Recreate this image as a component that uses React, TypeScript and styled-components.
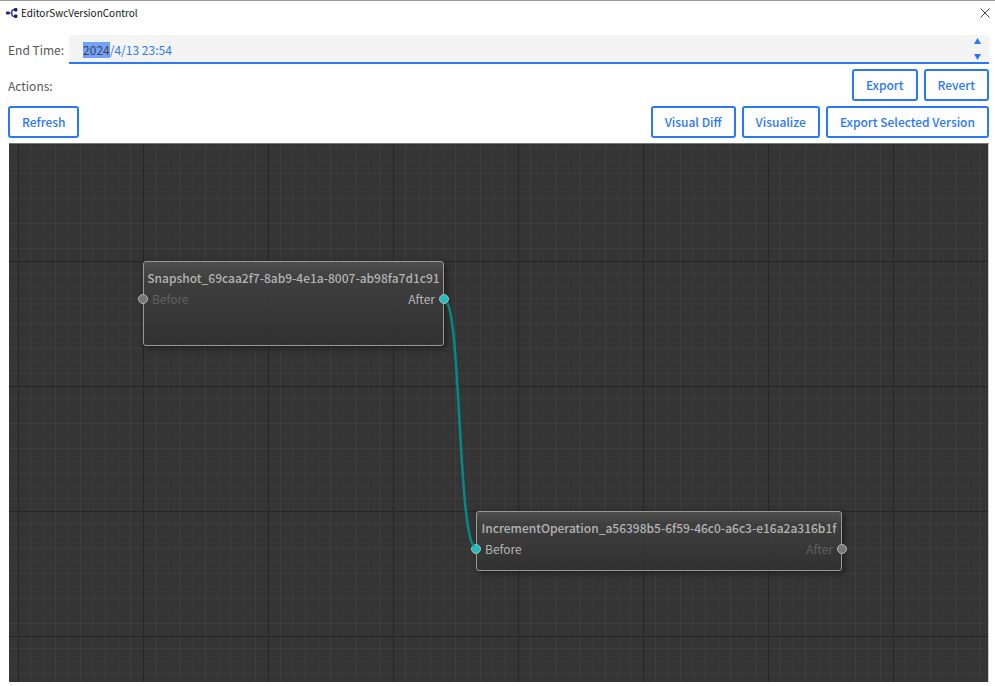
import React, { useEffect, useRef } from "react";
import styled, { createGlobalStyle } from "styled-components";

const Global = createGlobalStyle`
  *, *::before, *::after { box-sizing: border-box; }
  html, body, #root { height: 100%; }
  body {
    margin: 0;
    background: #fff;
    color: #555;
    font-family: "Noto Sans CJK SC", "Noto Sans", sans-serif;
    font-size: 12px;
  }
`;

const Window = styled.div`
  display: flex;
  flex-direction: column;
  min-height: 100%;
  border-top: 1px solid #999;
`;

const TitleBar = styled.header`
  display: flex;
  align-items: center;
  gap: 3px;
  height: 24px;
  padding: 0 5px 0 6px;
`;

const Title = styled.h1`
  flex: 1;
  margin: 0;
  color: #111;
  font-size: 10px;
  font-weight: 400;
  line-height: 22px;
`;

const CloseButton = styled.button`
  display: flex;
  padding: 0;
  border: 0;
  background: none;
`;

const Body = styled.main`
  flex: 1;
  display: flex;
  flex-direction: column;
  gap: 5px;
  padding: 10px 6px 4px 8px;
`;

const Field = styled.div`
  display: flex;
  align-items: center;
  gap: 5px;
`;

const Label = styled.label`
  line-height: 20px;
`;

const DateBox = styled.div`
  flex: 1;
  display: flex;
  align-items: center;
  height: 29px;
  padding: 0 8px 0 14px;
  border-bottom: 2px solid #2a78fa;
  border-radius: 3px 3px 0 0;
  background: #f4f4f4;
`;

const DateInput = styled.input`
  flex: 1;
  min-width: 0;
  padding: 2px 0 0;
  border: 0;
  outline: 0;
  background: none;
  color: #2a78fa;
  caret-color: transparent;
  font: inherit;
  line-height: 16px;

  &::selection {
    background: rgba(110, 162, 255, 0.99);
    color: #444;
  }
`;

const Spinner = styled.div`
  display: flex;
  flex-direction: column;
  gap: 10px;
`;

const SpinButton = styled.button`
  display: flex;
  padding: 0;
  border: 0;
  background: none;
`;

const Row = styled.div`
  display: flex;
  align-items: center;
  justify-content: space-between;
`;

const Buttons = styled.div`
  display: flex;
  gap: 6px;
`;

const ActionButton = styled.button`
  height: 32px;
  padding: 0 12px;
  border: 2px solid #2a78fa;
  border-radius: 3px;
  background: #fff;
  color: #2a78fa;
  font: inherit;
  font-weight: 500;
  line-height: 20px;
`;

const Canvas = styled.section`
  position: relative;
  flex: 1;
  min-height: 460px;
  margin: 0 0 0 1px;
  border-top: 1px solid #777;
  border-right: 1px solid #ccc;
  background: #353535;
  overflow: hidden;
`;

const Drawing = styled.svg`
  position: absolute;
  inset: 0;
  width: 100%;
  height: 100%;
`;

const NodeCard = styled.article<{ $x: number; $y: number; $w: number; $h: number }>`
  position: absolute;
  left: ${(p) => p.$x}px;
  top: ${(p) => p.$y}px;
  width: ${(p) => p.$w}px;
  height: ${(p) => p.$h}px;
  padding-top: 6px;
  border: 1px solid #999;
  border-radius: 3px;
  background: linear-gradient(
    rgba(82, 82, 82, 0.9),
    rgba(64, 64, 64, 0.9) 20%,
    rgba(56, 56, 56, 0.9) 60%,
    rgba(48, 48, 48, 0.9)
  );
  box-shadow: 2px 2px 6px rgba(20, 20, 20, 0.8);
`;

const NodeTitle = styled.h2`
  margin: 0;
  color: #b4b4b4;
  font-size: 12px;
  font-weight: 500;
  line-height: 20px;
  text-align: center;
  white-space: nowrap;
`;

const Ports = styled.div`
  display: flex;
  justify-content: space-between;
  margin: 1px -6px 0;
`;

const Port = styled.div<{ $on: boolean }>`
  display: flex;
  align-items: center;
  gap: 4px;
  color: ${(p) => (p.$on ? "#b4b4b4" : "#606060")};
  line-height: 20px;
`;

const Dot = styled.span<{ $on: boolean }>`
  width: 10px;
  height: 10px;
  border: 1px solid #b4b4b4;
  border-radius: 50%;
  background: ${(p) => (p.$on ? "#1fc0bd" : "#777")};
`;

const steps = [0, 1, 2, 3, 4];

function Grid() {
  return (
    <Drawing aria-hidden="true">
      <defs>
        <pattern id="grid" x="9" y="117" width="125" height="125" patternUnits="userSpaceOnUse">
          {steps.map((i) => (
            <g key={i} stroke="#3e3e3e" strokeWidth="1">
              <path d={`M${i * 25 + 12.5} 0V125M0 ${i * 25 + 12.5}H125`} />
              {i > 0 && <path stroke="#393939" d={`M${i * 25 + 0.5} 0V125M0 ${i * 25 + 0.5}H125`} />}
            </g>
          ))}
          <path d="M.5 0V125M0 .5H125" stroke="#262626" />
        </pattern>
      </defs>
      <rect width="100%" height="100%" fill="url(#grid)" />
    </Drawing>
  );
}

interface GraphNodeProps {
  title: string;
  x: number;
  y: number;
  w: number;
  h: number;
  before: boolean;
  after: boolean;
}

function GraphNode({ title, x, y, w, h, before, after }: GraphNodeProps) {
  return (
    <NodeCard $x={x} $y={y} $w={w} $h={h}>
      <NodeTitle>{title}</NodeTitle>
      <Ports>
        <Port $on={before}>
          <Dot $on={before} />
          Before
        </Port>
        <Port $on={after}>
          After
          <Dot $on={after} />
        </Port>
      </Ports>
    </NodeCard>
  );
}

export default function App() {
  const date = useRef<HTMLInputElement>(null);

  useEffect(() => {
    date.current?.focus();
    date.current?.setSelectionRange(0, 4);
  }, []);

  return (
    <>
      <Global />
      <Window>
        <TitleBar>
          <svg width="12" height="10" viewBox="0 0 12 10" aria-hidden="true">
            <path d="M2 5H5.500M10 1.700H8Q5.800 1.700 5.800 3.800V6.200Q5.800 8.300 8 8.300H10" fill="none" stroke="#1b1f7a" strokeWidth="1.200" />
            <rect x="0" y="3.400" width="3.600" height="3.200" rx="1" fill="#1b1f7a" />
            <rect x="8" y="0" width="3.400" height="3.400" rx="1" fill="#1b1f7a" />
            <rect x="8" y="6.600" width="3.400" height="3.400" rx="1" fill="#1b1f7a" />
          </svg>
          <Title>EditorSwcVersionControl</Title>
          <CloseButton aria-label="Close">
            <svg width="10" height="10" viewBox="0 0 10 10">
              <path d="M.5.5 9.500 9.500M9.500.5.5 9.500" stroke="#444" />
            </svg>
          </CloseButton>
        </TitleBar>
        <Body>
          <Field>
            <Label htmlFor="end-time">End Time:</Label>
            <DateBox>
              <DateInput id="end-time" ref={date} defaultValue="2024/4/13 23:54" />
              <Spinner>
                <SpinButton aria-label="Increase">
                  <svg width="7" height="6" viewBox="0 0 7 6"><path d="M3.500 0 7 6H0Z" fill="#2a78fa" /></svg>
                </SpinButton>
                <SpinButton aria-label="Decrease">
                  <svg width="7" height="6" viewBox="0 0 7 6"><path d="M3.500 6 7 0H0Z" fill="#2a78fa" /></svg>
                </SpinButton>
              </Spinner>
            </DateBox>
          </Field>
          <Row>
            <span>Actions:</span>
            <Buttons>
              <ActionButton>Export</ActionButton>
              <ActionButton>Revert</ActionButton>
            </Buttons>
          </Row>
          <Row>
            <ActionButton>Refresh</ActionButton>
            <Buttons>
              <ActionButton>Visual Diff</ActionButton>
              <ActionButton>Visualize</ActionButton>
              <ActionButton>Export Selected Version</ActionButton>
            </Buttons>
          </Row>
          <Canvas aria-label="Version graph">
            <Grid />
            <GraphNode title="Snapshot_69caa2f7-8ab9-4e1a-8007-ab98fa7d1c91" x={134} y={117} w={301} h={85} before={false} after />
            <GraphNode title="IncrementOperation_a56398b5-6f59-46c0-a6c3-e16a2a316b1f" x={467} y={367} w={366} h={60} before after={false} />
            <Drawing aria-hidden="true">
              <path d="M438 159C451 175 450 390 465 402" fill="none" stroke="#008b87" strokeWidth="2.500" />
            </Drawing>
          </Canvas>
        </Body>
      </Window>
    </>
  );
}
